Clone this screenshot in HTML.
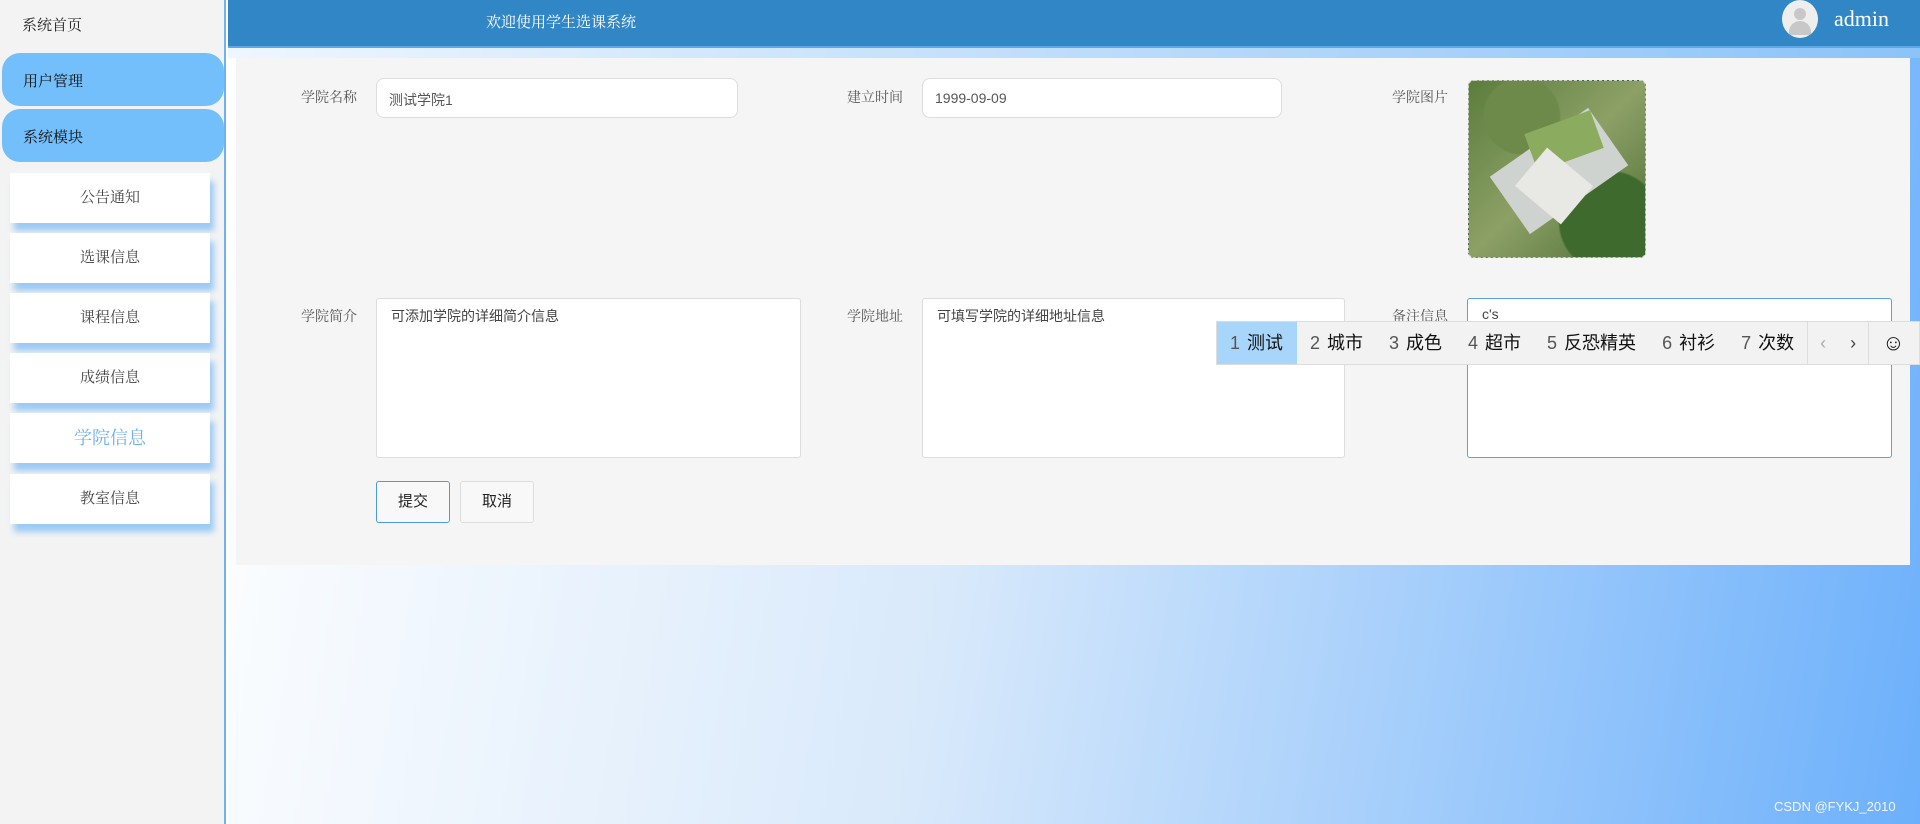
<!DOCTYPE html>
<html><head><meta charset="utf-8"><style>
*{margin:0;padding:0;box-sizing:border-box}
body{width:1920px;height:824px;overflow:hidden;position:relative;font-family:"Liberation Sans","Noto Sans CJK SC",sans-serif;background:#fff}
.serif{font-family:"Liberation Serif","Noto Serif CJK SC",serif}
#side{position:absolute;left:0;top:0;width:226px;height:824px;background:#f3f3f3;border-right:2px solid #6fb2ee}
.home{position:absolute;left:22px;top:14px;font-size:15px;color:#222}
.pill{position:absolute;left:2px;width:222px;height:53px;background:#72bffc;border-radius:18px;font-size:15px;color:#111;padding:17px 0 0 21px}
.sub{position:absolute;left:10px;width:200px;height:50px;background:#fff;box-shadow:4px 8px 6px #9ccaf5;text-align:center;line-height:50px;font-size:15px;color:#444}
#main{position:absolute;left:228px;top:0;width:1692px;height:824px;background:linear-gradient(100deg,#ffffff 0%,#d8e9fb 45%,#6cb0fb 100%)}
#hdr{position:absolute;left:228px;top:0;width:1692px;height:48px;background:#3187c5;border-bottom:2px solid #5fa8e8}
.strip{position:absolute;left:228px;top:48px;width:1692px;height:10px;background:linear-gradient(90deg,#eef6ff,#8cc3f8)}
#panel{position:absolute;left:236px;top:58px;width:1674px;height:507px;background:#f5f5f5}
.lbl{position:absolute;font-size:14px;color:#555}
.inp{position:absolute;height:40px;background:#fff;border:1px solid #ddd;border-radius:8px;font-size:14px;color:#555;padding:11px 12px}
.ta{position:absolute;height:160px;background:#fff;border:1px solid #ddd;border-radius:3px;font-size:14px;color:#444;padding:7px 14px}
.btn{position:absolute;top:481px;height:42px;width:74px;border:1px solid #ddd;border-radius:3px;background:#f8f8f8;text-align:center;line-height:40px;font-size:15px;color:#222}
#ime{position:absolute;left:1216px;top:321px;width:704px;height:44px;background:#f2f2f2;border:1px solid #ddd;font-size:18px;color:#111;display:flex;align-items:center}
#ime span{display:inline-block;padding:0 13px;height:42px;line-height:42px}
#ime b{font-weight:normal;color:#555;margin-right:7px}
</style></head><body>
<div id="side">
<div class="home serif">系统首页</div>
<div class="pill serif" style="top:53px">用户管理</div>
<div class="pill serif" style="top:109px">系统模块</div>
<div class="sub serif" style="top:173px">公告通知</div>
<div class="sub serif" style="top:233px">选课信息</div>
<div class="sub serif" style="top:293px">课程信息</div>
<div class="sub serif" style="top:353px">成绩信息</div>
<div class="sub serif" style="top:413px;color:#6eb0ee;font-size:18px">学院信息</div>
<div class="sub serif" style="top:474px">教室信息</div>
</div>
<div id="main"></div>
<div id="hdr">
<div class="serif" style="position:absolute;left:258px;top:11px;color:#fff;font-size:15px">欢迎使用学生选课系统</div>
<div style="position:absolute;left:1554px;top:0;width:36px;height:38px;border-radius:50%;background:#eee;overflow:hidden"><div style="position:absolute;left:12px;top:8px;width:12px;height:12px;border-radius:50%;background:#c8c8c8"></div><div style="position:absolute;left:7px;top:21px;width:22px;height:14px;border-radius:11px 11px 2px 2px;background:#c8c8c8"></div></div>
<div style="position:absolute;left:1606px;top:6px;color:#fff;font-size:22px;font-family:'Liberation Serif',serif">admin</div>
</div>
<div class="strip"></div>
<div id="panel"></div>
<div class="lbl serif" style="left:301px;top:87px">学院名称</div>
<div class="inp" style="left:376px;top:78px;width:362px">测试学院1</div>
<div class="lbl serif" style="left:847px;top:87px">建立时间</div>
<div class="inp" style="left:922px;top:78px;width:360px">1999-09-09</div>
<div class="lbl serif" style="left:1392px;top:87px">学院图片</div>
<div style="position:absolute;left:1468px;top:80px;width:178px;height:178px;border-radius:6px;border:1px dashed #ccc;overflow:hidden;background:radial-gradient(circle at 30% 20%,#6d8a4a 0 20%,transparent 21%),radial-gradient(circle at 80% 80%,#3f6a2e 0 25%,transparent 26%),linear-gradient(135deg,#5a7d3c,#8da066 50%,#4b6d34)">
<div style="position:absolute;left:30px;top:55px;width:120px;height:70px;background:#cfd3d0;transform:rotate(-35deg)"></div>
<div style="position:absolute;left:60px;top:40px;width:70px;height:40px;background:#8bab5f;transform:rotate(-20deg)"></div>
<div style="position:absolute;left:55px;top:80px;width:60px;height:50px;background:#e8e8e4;transform:rotate(40deg)"></div>
</div>
<div class="lbl serif" style="left:301px;top:306px">学院简介</div>
<div class="ta" style="left:376px;top:298px;width:425px">可添加学院的详细简介信息</div>
<div class="lbl serif" style="left:847px;top:306px">学院地址</div>
<div class="ta" style="left:922px;top:298px;width:423px">可填写学院的详细地址信息</div>
<div class="lbl serif" style="left:1392px;top:306px">备注信息</div>
<div class="ta" style="left:1467px;top:298px;width:425px;border-color:#5aa2e0">c's</div>
<div class="btn" style="left:376px;border-color:#4a9be0">提交</div>
<div class="btn" style="left:460px">取消</div>
<div id="ime">
<span style="background:#a8d6fb;width:80px"><b>1</b>测试</span>
<span><b>2</b>城市</span><span><b>3</b>成色</span><span><b>4</b>超市</span><span><b>5</b>反恐精英</span><span><b>6</b>衬衫</span><span><b>7</b>次数</span>
<span style="border-left:1px solid #ddd;color:#aaa;padding:0 12px">‹</span><span style="color:#444;padding:0 12px">›</span><span style="border-left:1px solid #ddd;font-size:22px">☺</span>
</div>
<div style="position:absolute;left:1774px;top:799px;font-size:13px;color:#f0f6ff">CSDN @FYKJ_2010</div>
</body></html>
